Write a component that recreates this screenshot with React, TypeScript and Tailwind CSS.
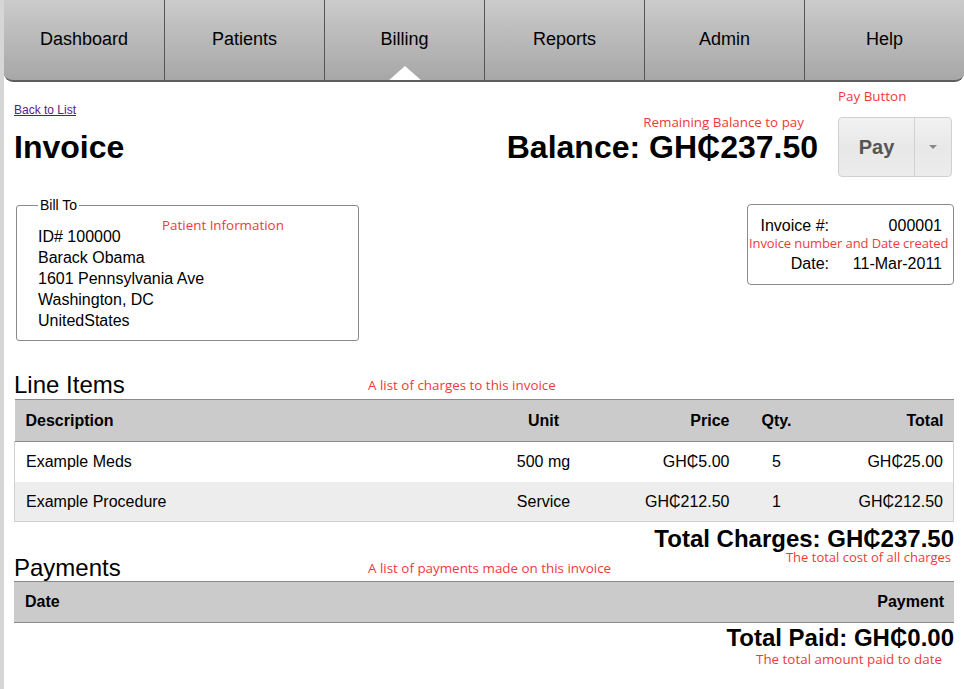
import React from 'react'

const tabs = ['Dashboard', 'Patients', 'Billing', 'Reports', 'Admin', 'Help']

const lineItems = [
  { description: 'Example Meds', unit: '500 mg', price: 'GH₵5.00', qty: '5', total: 'GH₵25.00' },
  { description: 'Example Procedure', unit: 'Service', price: 'GH₵212.50', qty: '1', total: 'GH₵212.50' },
]

function Note({ children, className = '' }: { children: React.ReactNode; className?: string }) {
  return (
    <span className={`font-['Open_Sans','Noto_Sans',sans-serif] leading-none text-[#f03a3a] ${className}`}>
      {children}
    </span>
  )
}

export default function App() {
  return (
    <div className="flex min-h-[689px] w-[964px] bg-white font-['Liberation_Sans',Arial,sans-serif] text-black">
      <div className="w-[4px] shrink-0 bg-[#d6d6d6]" />
      <div className="flex-1">
        {/* top nav */}
        <nav className="flex h-[82px] overflow-hidden rounded-b-[9px] border-b-2 border-[#5e5e5e] bg-gradient-to-b from-[#cbcbcb] to-[#a7a7a7]">
          {tabs.map((t, i) => (
            <div
              key={t}
              className={`relative flex w-[160px] items-center justify-center pb-[2px] text-[18px] ${i > 0 ? 'border-l border-[#555]' : ''}`}
            >
              {t}
              {t === 'Billing' && (
                <div className="absolute bottom-[-1px] left-1/2 h-0 w-0 -translate-x-1/2 border-x-[17px] border-b-[15px] border-x-transparent border-b-white" />
              )}
            </div>
          ))}
        </nav>

        <div className="pl-[10px] pr-[10px]">
          {/* header */}
          <div className="flex items-start justify-between pt-[15px]">
            <div>
              <a href="#" className="text-[12px] text-[#551a8b] underline">Back to List</a>
              <h1 className="mt-[10px] text-[32px] font-bold leading-none">Invoice</h1>
            </div>
            <div className="flex items-start">
              <div className="mt-[19px] flex flex-col items-end">
                <Note className="mr-[14px] text-[13.4px]">Remaining Balance to pay</Note>
                <div className="mt-[2px] text-[32px] font-bold leading-none">Balance: GH₵237.50</div>
              </div>
              <div className="ml-[20px] flex flex-col items-start">
                <Note className="mt-[-7px] mb-[14px] text-[13.4px]">Pay Button</Note>
                <div className="mr-[2px] flex h-[60px] w-[114px] overflow-hidden rounded-[4px] border border-[#d0d0d0] bg-gradient-to-b from-[#f2f2f2] via-[#e8e8e8] to-[#ececec]">
                  <div className="flex w-[75px] items-center justify-center text-[20px] font-bold text-[#555]">Pay</div>
                  <div className="flex flex-1 items-center justify-center border-l border-[#d0d0d0]">
                    <div className="h-0 w-0 border-x-[4px] border-t-[4px] border-x-transparent border-t-[#888]" />
                  </div>
                </div>
              </div>
            </div>
          </div>

          {/* bill to and invoice info */}
          <div className="mt-[21px] flex items-start justify-between">
            <fieldset className="relative ml-[2px] h-[143px] w-[343px] rounded-[3px] border border-[#8a8a8a] pl-[21px] pt-[2px]">
              <legend className="px-[2px] text-[14px] leading-none">Bill To</legend>
              <Note className="absolute left-[145px] top-[7px] text-[13.4px]">Patient Information</Note>
              <div className="mt-[12px] text-[16px] leading-[21px]">
                <div>ID# 100000</div>
                <div>Barack Obama</div>
                <div>1601 Pennsylvania Ave</div>
                <div>Washington, DC</div>
                <div>UnitedStates</div>
              </div>
            </fieldset>
            <div className="mt-[6px] flex h-[81px] w-[207px] flex-col rounded-[4px] border border-[#8a8a8a] pt-[13px] text-[16px] leading-none">
              <div className="flex">
                <span className="w-[81px] text-right">Invoice #:</span>
                <span className="flex-1 pr-[11px] text-right">000001</span>
              </div>
              <Note className="mt-[3px] block whitespace-nowrap pl-[1px] text-[13px] tracking-[-0.1px]">Invoice number and Date created</Note>
              <div className="mt-[6px] flex">
                <span className="w-[81px] text-right">Date:</span>
                <span className="flex-1 pr-[11px] text-right">11-Mar-2011</span>
              </div>
            </div>
          </div>

          {/* line items */}
          <div className="relative mt-[32px]">
            <h2 className="text-[24px] leading-none">Line Items</h2>
            <Note className="absolute left-[354px] top-[6px] text-[13.4px]">A list of charges to this invoice</Note>
          </div>
          <table className="mt-[2px] w-[940px] border-collapse text-[16px]">
            <thead>
              <tr className="h-[42px] border-y border-[#8a8a8a] bg-[#cbcbcb] font-bold">
                <th className="pl-[11px] text-left">Description</th>
                <th className="w-[156px] text-center">Unit</th>
                <th className="w-[108px] text-right">Price</th>
                <th className="w-[94px] text-center">Qty.</th>
                <th className="w-[130px] pr-[10px] text-right">Total</th>
              </tr>
            </thead>
            <tbody>
              {lineItems.map((item, i) => (
                <tr key={item.description} className={`h-[40px] ${i % 2 ? 'bg-[#ededed]' : 'bg-white'}`}>
                  <td className="border-l border-[#d0d0d0] pl-[11px]">{item.description}</td>
                  <td className="text-center">{item.unit}</td>
                  <td className="text-right">{item.price}</td>
                  <td className="text-center">{item.qty}</td>
                  <td className="border-r border-[#d0d0d0] pr-[10px] text-right">{item.total}</td>
                </tr>
              ))}
              <tr className="h-0 border-t border-[#cfcfcf]"><td colSpan={5} /></tr>
            </tbody>
          </table>
          <div className="mt-[5px] flex w-[940px] flex-col items-end">
            <div className="text-[24px] font-bold leading-none">Total Charges: GH₵237.50</div>
            <Note className="mr-[3px] text-[13px]">The total cost of all charges</Note>
          </div>

          {/* payments */}
          <div className="relative mt-[-8px]">
            <h2 className="text-[24px] leading-none">Payments</h2>
            <Note className="absolute left-[354px] top-[6px] text-[13.4px]">A list of payments made on this invoice</Note>
          </div>
          <table className="mt-[1px] w-[940px] border-collapse text-[16px]">
            <thead>
              <tr className="h-[41px] border-y border-[#8a8a8a] bg-[#cbcbcb] font-bold">
                <th className="pl-[11px] text-left">Date</th>
                <th className="pr-[10px] text-right">Payment</th>
              </tr>
            </thead>
          </table>
          <div className="mt-[3px] flex w-[940px] flex-col items-end">
            <div className="text-[24px] font-bold leading-none">Total Paid: GH₵0.00</div>
            <Note className="mr-[12px] mt-[3px] text-[13.4px]">The total amount paid to date</Note>
          </div>
        </div>
      </div>
    </div>
  )
}
